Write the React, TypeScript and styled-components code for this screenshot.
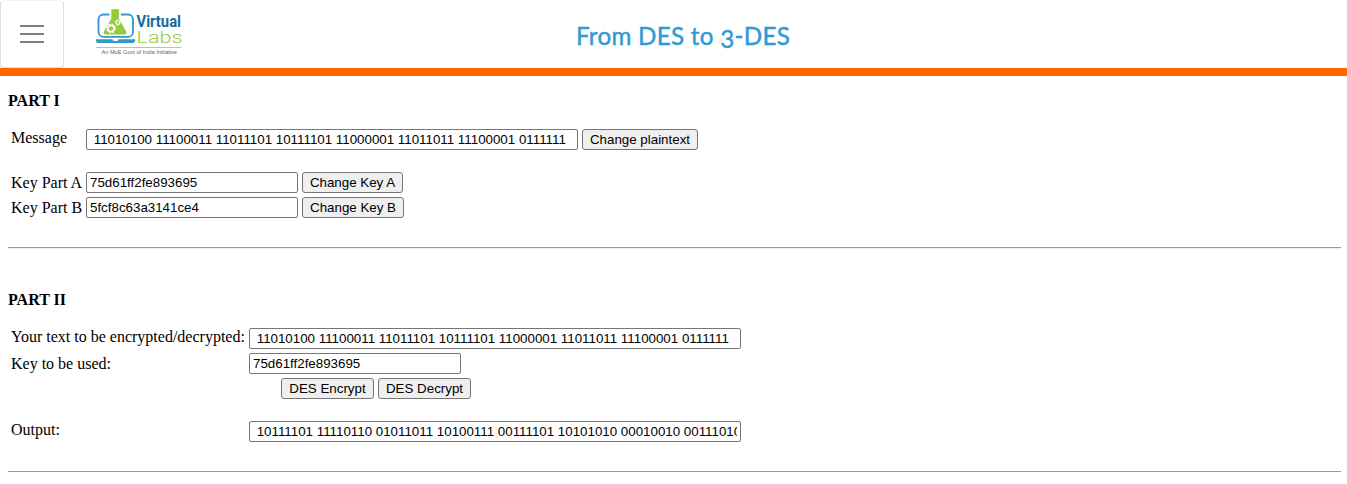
import React from "react";
import styled, { createGlobalStyle } from "styled-components";

const GlobalStyle = createGlobalStyle`
  * { box-sizing: border-box; }
  body {
    margin: 0;
    background: #fff;
    color: #000;
    font-family: "Liberation Serif", "Times New Roman", serif;
    font-size: 16px;
    overflow: hidden;
  }
`;

const Header = styled.header`
  display: grid;
  grid-template-columns: 64px 118px 1fr 163px;
  height: 76px;
  border-bottom: 8px solid #ff6600;
`;

const MenuButton = styled.button`
  display: flex;
  align-items: center;
  justify-content: center;
  height: 68px;
  padding: 0;
  background: #fff;
  border: 1px solid #dfdfdf;
  border-top-color: #f4f4f4;
  border-radius: 4px;
`;

const Logo = styled.svg`
  display: block;
  margin-left: 31px;
`;

const Title = styled.h1`
  margin: 0;
  padding-top: 20px;
  text-align: center;
  white-space: nowrap;
  color: #2e9bd2;
  font: 400 24.2px/32px Lato, sans-serif;
  letter-spacing: 0.28px;
  -webkit-text-stroke: 0.45px #2e9bd2;
`;

const LowDigit = styled.span`
  display: inline-block;
  line-height: 1;
  vertical-align: -3px;
`;

const Section = styled.section<{ $top: number; $bottom: number }>`
  margin: 0 6px 0 8px;
  padding: ${(p) => p.$top}px 0 ${(p) => p.$bottom}px;
  border-bottom: 1px solid #9a9a9a;
  box-shadow: 0 1px 0 #eeeeee;
`;

const Heading = styled.h2`
  margin: 0 0 18px;
  font-size: 16px;
  line-height: 20px;
  font-weight: bold;
`;

const Row = styled.div<{ $label: number; $gap?: number }>`
  display: grid;
  grid-template-columns: ${(p) => p.$label}px auto;
  height: 21px;
  margin-top: ${(p) => p.$gap ?? 4}px;
`;

const Label = styled.label<{ $shift?: number }>`
  padding-left: 3px;
  font-size: 16px;
  line-height: 20px;
  margin-top: ${(p) => p.$shift ?? 0}px;
  white-space: nowrap;
`;

const Controls = styled.div<{ $indent?: number }>`
  display: flex;
  gap: 4px;
  padding-left: ${(p) => p.$indent ?? 0}px;
`;

const Field = styled.input<{ $wide?: boolean }>`
  width: ${(p) => (p.$wide ? 492 : 212)}px;
  height: 21px;
  margin: 0;
  padding: 1px 3px;
  border: 1px solid #767676;
  border-radius: 2px;
  background: #fff;
  color: #000;
  font: 13.333px "Liberation Sans", Arial, sans-serif;
`;

const Button = styled.button<{ $width: number }>`
  width: ${(p) => p.$width}px;
  height: 21px;
  padding: 0;
  border: 1px solid #767676;
  border-radius: 3px;
  background: #efefef;
  color: #000;
  white-space: nowrap;
  font: 13.333px "Liberation Sans", Arial, sans-serif;
`;

const PLAINTEXT =
  " 11010100 11100011 11011101 10111101 11000001 11011011 11100001 0111111";
const OUTPUT =
  " 10111101 11110110 01011011 10100111 00111101 10101010 00010010 00111010";

function LabsLogo() {
  return (
    <Logo width="90" height="62" viewBox="95 0 90 62">
      <rect x="98.5" y="14.5" width="34.5" height="22.4" rx="5" fill="#fff" stroke="#2f98d0" strokeWidth="1.8" />
      <path d="M109.5 8h11.5v10l5 10H104l5.5-10z" fill="#fff" />
      <path d="M111.3 9.3h7.6v9.4l7.2 12.6c.9 1.8.1 3.2-1.5 3.2h-19c-1.8 0-2.5-1.4-1.6-3.2l7.3-12.6z" fill="#96ca3d" />
      <circle cx="111" cy="28.5" r="3.1" fill="none" stroke="#fff" strokeWidth="1.6" />
      <circle cx="111" cy="28.5" r="4.4" fill="none" stroke="#fff" strokeWidth="1.2" strokeDasharray="1.7 1.756" />
      <circle cx="117.8" cy="22.6" r="1.8" fill="none" stroke="#fff" strokeWidth="1.1" />
      <circle cx="117.8" cy="22.6" r="2.7" fill="none" stroke="#fff" strokeWidth="0.8" strokeDasharray="1.05 1.07" />
      <path d="M96 39.3h16.5l1 1.6h4l1-1.6H135v1.4a2.3 2.3 0 0 1-2.3 2.3H98.3a2.3 2.3 0 0 1-2.3-2.3z" fill="#2f98d0" />
      <text x="136.5" y="26.8" textLength="44.5" lengthAdjust="spacingAndGlyphs" fontFamily="Roboto, sans-serif" fontSize="16.8" fontWeight="700" fill="#17699f">Virtual</text>
      <text x="136.5" y="43" textLength="46" lengthAdjust="spacingAndGlyphs" fontFamily="Roboto, sans-serif" fontSize="17" fontWeight="300" fill="#96ca3d">Labs</text>
      <path d="M96 47.5h85.5" stroke="#bdbdbd" strokeWidth="1" />
      <text x="101.5" y="54.3" textLength="75.5" lengthAdjust="spacingAndGlyphs" fontFamily="Liberation Sans, sans-serif" fontSize="5.8" fill="#666">An MoE Govt of India Initiative</text>
    </Logo>
  );
}

export default function App() {
  return (
    <>
      <GlobalStyle />
      <Header>
        <MenuButton aria-label="Menu">
          <svg width="24" height="20" viewBox="0 0 24 20">
            <path d="M0 2h24M0 10h24M0 18h24" stroke="#808080" strokeWidth="1.8" />
          </svg>
        </MenuButton>
        <LabsLogo />
        <Title>
          From DES to <LowDigit>3</LowDigit>-DES
        </Title>
      </Header>
      <main>
        <Section $top={15} $bottom={29}>
          <Heading>PART I</Heading>
          <Row $label={78} $gap={0}>
            <Label $shift={-1}>Message</Label>
            <Controls>
              <Field $wide readOnly value={PLAINTEXT} />
              <Button $width={116}>Change plaintext</Button>
            </Controls>
          </Row>
          <Row $label={78} $gap={22}>
            <Label $shift={1}>Key Part A</Label>
            <Controls>
              <Field readOnly value="75d61ff2fe893695" />
              <Button $width={101}>Change Key A</Button>
            </Controls>
          </Row>
          <Row $label={78}>
            <Label $shift={1}>Key Part B</Label>
            <Controls>
              <Field readOnly value="5fcf8c63a3141ce4" />
              <Button $width={102}>Change Key B</Button>
            </Controls>
          </Row>
        </Section>
        <Section $top={42} $bottom={29}>
          <Heading>PART II</Heading>
          <Row $label={241} $gap={0}>
            <Label $shift={-1}>Your text to be encrypted/decrypted:</Label>
            <Controls>
              <Field $wide readOnly value={PLAINTEXT} />
            </Controls>
          </Row>
          <Row $label={241}>
            <Label $shift={1}>Key to be used:</Label>
            <Controls>
              <Field readOnly value="75d61ff2fe893695" />
            </Controls>
          </Row>
          <Row $label={241}>
            <span />
            <Controls $indent={32}>
              <Button $width={93}>DES Encrypt</Button>
              <Button $width={93}>DES Decrypt</Button>
            </Controls>
          </Row>
          <Row $label={241} $gap={22}>
            <Label $shift={-1}>Output:</Label>
            <Controls>
              <Field $wide readOnly value={OUTPUT} />
            </Controls>
          </Row>
        </Section>
      </main>
    </>
  );
}
